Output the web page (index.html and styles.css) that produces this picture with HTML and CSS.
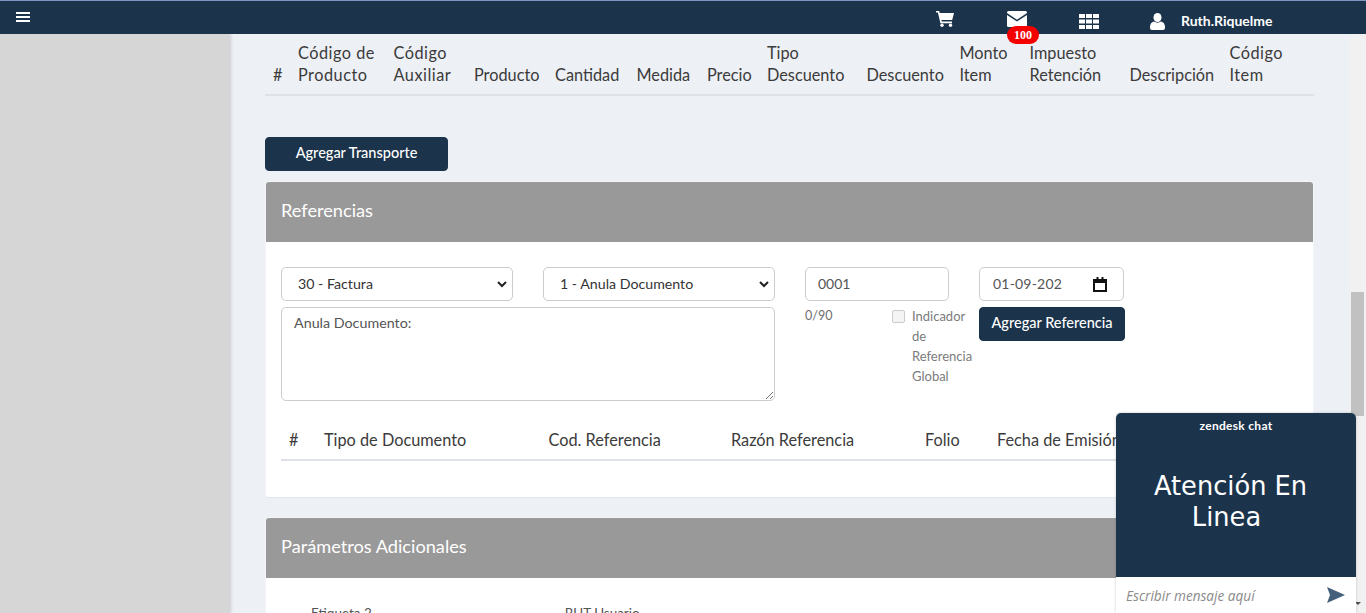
FILE: index.html
```html
<!DOCTYPE html>
<html lang="es">
<head>
<meta charset="utf-8">
<title>Referencias</title>
<link rel="stylesheet" href="styles.css">
</head>
<body>
<header class="topbar">
  <svg class="burger" viewBox="0 0 14 12" width="14" height="12"><path d="M0 1h14v2H0zM0 5h14v2H0zM0 9h14v2H0z" fill="#fff"/></svg>
  <div class="top-icons">
    <svg class="ic-cart" viewBox="0 0 18 16" width="18" height="16"><path d="M0 0h3.2l.5 2H18l-1.8 7H5.4l.4 1.6H16v1.6H4.400L1.900 1.600H0z" fill="#fff"/><circle cx="6" cy="14.300" r="1.700" fill="#fff"/><circle cx="14.500" cy="14.300" r="1.700" fill="#fff"/></svg>
    <div class="mail">
      <svg viewBox="0 0 20 16" width="20" height="16"><path d="M1.500 0h17A1.500 1.500 0 0 1 20 1.500v.6l-10 6.600L0 2.100v-.6A1.500 1.500 0 0 1 1.500 0z" fill="#fff"/><path d="M0 4l10 6.600L20 4v10.500a1.500 1.500 0 0 1-1.500 1.500h-17A1.500 1.500 0 0 1 0 14.500z" fill="#fff"/></svg>
      <span class="badge">100</span>
    </div>
    <svg class="ic-grid" viewBox="0 0 20 15" width="20" height="15"><path d="M0 0h6v4H0zM7 0h6v4H7zM14 0h6v4h-6zM0 5.500h6v4H0zM7 5.500h6v4H7zM14 5.500h6v4h-6zM0 11h6v4H0zM7 11h6v4H7zM14 11h6v4h-6z" fill="#fff"/></svg>
    <div class="user">
      <svg viewBox="0 0 15 17" width="15" height="17"><ellipse cx="7.500" cy="4.500" rx="4" ry="4.500" fill="#fff"/><path d="M0 14c0-3 1.500-5 4-5.500 2 1.500 5 1.500 7 0 2.500.5 4 2.500 4 5.500v1a2 2 0 0 1-2 2H2a2 2 0 0 1-2-2z" fill="#fff"/></svg>
      <span>Ruth.Riquelme</span>
    </div>
  </div>
</header>
<div class="shell">
  <aside class="sidebar"></aside>
  <main class="content">
    <div class="head-row items-head">
      <span class="c-num">#</span>
      <span class="c-cod wide">Código de Producto</span>
      <span class="c-aux wide">Código Auxiliar</span>
      <span class="c-prod">Producto</span>
      <span class="c-cant">Cantidad</span>
      <span class="c-med">Medida</span>
      <span class="c-pre">Precio</span>
      <span class="c-tipo">Tipo Descuento</span>
      <span class="c-desc">Descuento</span>
      <span class="c-mon">Monto Item</span>
      <span class="c-imp">Impuesto Retención</span>
      <span class="c-dsc">Descripción</span>
      <span class="c-item wide">Código Item</span>
    </div>
    <button class="btn btn-transporte">Agregar Transporte</button>
    <section class="card">
      <h2 class="card-head">Referencias</h2>
      <div class="card-body">
        <div class="ref-form">
          <div class="col-main">
            <div class="selects">
              <div class="select sel-a"><span>30 - Factura</span><svg viewBox="0 0 10 7" width="10" height="7"><path d="M1 1l4 4 4-4" fill="none" stroke="#222" stroke-width="2"/></svg></div>
              <div class="select sel-b"><span>1 - Anula Documento</span><svg viewBox="0 0 10 7" width="10" height="7"><path d="M1 1l4 4 4-4" fill="none" stroke="#222" stroke-width="2"/></svg></div>
            </div>
            <div class="textarea">Anula Documento:
              <svg class="grip" viewBox="0 0 8 8" width="8" height="8"><path d="M1 8l7-7M5 8l3-3" stroke="#777" stroke-width="1"/></svg>
            </div>
          </div>
          <div class="col-folio">
            <div class="input">0001</div>
            <div class="count">0/90</div>
          </div>
          <div class="col-check">
            <span class="check"></span>
            <span class="check-label">Indicador de Referencia Global</span>
          </div>
          <div class="col-date">
            <div class="input date"><span class="date-text">01-09-2021</span>
              <svg viewBox="0 0 14 15" width="14" height="15"><path d="M1 3h12v11H1z" fill="none" stroke="#111" stroke-width="2"/><path d="M1 3h12v3H1zM3.500 0h2v3h-2zM8.500 0h2v3h-2z" fill="#111"/></svg>
            </div>
            <button class="btn btn-ref">Agregar Referencia</button>
          </div>
        </div>
        <div class="head-row ref-head">
          <span class="r-num">#</span>
          <span class="r-tipo">Tipo de Documento</span>
          <span class="r-cod">Cod. Referencia</span>
          <span class="r-raz">Razón Referencia</span>
          <span class="r-fol">Folio</span>
          <span class="r-fec">Fecha de Emisión</span>
        </div>
      </div>
    </section>
    <section class="card card-params">
      <h2 class="card-head">Parámetros Adicionales</h2>
      <div class="params">
        <span class="p-a">Etiqueta 2</span>
        <span class="p-b">RUT Usuario</span>
      </div>
    </section>
  </main>
  <div class="scrollbar"><div class="thumb"></div><span class="arrow"></span></div>
</div>
<div class="chat">
  <div class="chat-top">
    <div class="chat-brand">zendesk chat</div>
    <div class="chat-title"><span class="line-one">Atención En</span><span class="line-two">Linea</span></div>
  </div>
  <div class="chat-input">
    <span>Escribir mensaje aquí</span>
    <svg viewBox="0 0 18 16" width="18" height="16"><path d="M0 0l18 8-18 8 3-8z" fill="#44607a"/></svg>
  </div>
</div>
</body>
</html>
```
FILE: styles.css
```css
* { box-sizing: border-box; }
html, body { margin: 0; height: 613px; overflow: hidden; }
body { font-family: "Lato", "Noto Sans", sans-serif; color: #3d3d3d; background: #edf0f5; }

.topbar { height: 34px; background: #1b344c; border-top: 1px solid #7f95c4; display: flex; align-items: flex-start; position: relative; padding-left: 16px; }
.burger { margin-top: 10px; }
.top-icons { display: flex; align-items: flex-start; margin-left: 906px; }
.ic-cart { margin-top: 10px; }
.mail { margin-left: 53px; margin-top: 10px; position: relative; height: 16px; }
.mail svg { display: block; }
.badge { position: absolute; left: 0; top: 15px; width: 32px; height: 18px; background: #f40000; color: #fff; border-radius: 9px; font: bold 12px/18px "Liberation Serif", serif; text-align: center; z-index: 3; }
.ic-grid { margin-left: 52px; margin-top: 13px; }
.user { display: flex; margin-left: 51px; margin-top: 12px; color: #fff; font-size: 14px; font-weight: 700; }
.user span { margin-left: 16px; line-height: 16px; }

.shell { display: flex; height: 579px; }
.sidebar { width: 230px; background: #d6d6d6; box-shadow: 1px 0 3px rgba(0,0,0,.15); flex: none; }
.content { width: 1120px; flex: none; padding-left: 35px; overflow: hidden; }
.scrollbar { width: 16px; background: #f1f1f1; flex: none; padding-top: 258px; position: relative; }
.thumb { width: 13px; margin-left: 1px; height: 124px; background: #c1c1c1; }
.arrow { position: absolute; left: 5px; bottom: 8px; width: 0; height: 0; border-left: 3px solid transparent; border-right: 3px solid transparent; border-top: 3px solid #505050; }

.head-row { display: flex; align-items: flex-end; font-size: 16.300px; line-height: 22px; color: #3b3b3b; }
.wide { letter-spacing: .5px; }
.items-head { width: 1049px; height: 62px; padding-bottom: 8px; border-bottom: 2px solid #dee2e6; }
.c-num { width: 33px; padding-left: 8px; }
.c-cod { width: 95.500px; }
.c-aux { width: 80.500px; }
.c-prod { width: 81px; }
.c-cant { width: 81.500px; }
.c-med { width: 70.500px; }
.c-pre { width: 60px; }
.c-tipo { width: 99.500px; }
.c-desc { width: 93px; }
.c-mon { width: 70px; }
.c-imp { width: 100px; }
.c-dsc { width: 100px; }
.c-item { width: 70px; }

.btn { background: #1b344c; color: #fff; border: 1px solid #1b344c; border-radius: 4px; font-family: inherit; font-size: 14.500px; font-weight: 500; padding: 0 0 4px; }
.btn-transporte { display: block; width: 183px; height: 34px; margin-top: 41px; }

.card { width: 1049px; background: #fff; border: 1px solid #f3f5f8; border-bottom-color: #e2e5ea; border-radius: 4px; overflow: hidden; margin-top: 10px; height: 317px; }
.card-head { margin: 0; height: 60px; background: #999; color: #fff; font-size: 18.200px; font-weight: 400; line-height: 56px; padding-left: 15px; }
.card-body { padding: 25px 15px 0; }
.ref-form { display: flex; height: 143px; }
.col-main { width: 494px; }
.selects { display: flex; justify-content: space-between; }
.select { width: 232px; height: 34px; border: 1px solid #ccc; border-radius: 5px; display: flex; align-items: center; justify-content: space-between; padding: 0 5px 2px 16px; font-size: 14.200px; color: #333; }
.select svg { margin-top: 2px; }
.textarea { position: relative; height: 94px; margin-top: 6px; border: 1px solid #ccc; border-radius: 5px; padding: 5px 12px; font-size: 14.300px; line-height: 20px; color: #555; }
.grip { position: absolute; right: 1px; bottom: 1px; }
.col-folio { width: 144px; margin-left: 30px; }
.input { height: 34px; border: 1px solid #ccc; border-radius: 5px; padding: 0 12px; font-size: 14px; line-height: 32px; color: #555; }
.count { font-size: 12.500px; margin-top: 5px; line-height: 20px; color: #6f6f6f; }
.col-check { width: 87px; margin-left: -57px; padding-top: 39px; display: flex; }
.check { width: 13px; height: 13px; border: 1px solid #ccc; border-radius: 2px; background: #f4f4f4; margin-top: 4px; flex: none; }
.check-label { margin-left: 7px; font-size: 13px; line-height: 20px; color: #7b7b7b; width: 64px; }
.col-date { width: 146px; margin-left: 0; }
.date { width: 145px; padding: 0 16px 0 13px; display: flex; align-items: center; justify-content: space-between; letter-spacing: .2px; }
.date-text { width: 70px; white-space: nowrap; overflow: hidden; }
.btn-ref { width: 146px; height: 34px; margin-top: 6px; display: block; }

.ref-head { height: 51px; width: 1017px; padding-bottom: 8px; border-bottom: 2px solid #dee2e6; margin-top: 0; }
.r-num { width: 43px; padding-left: 8px; }
.r-tipo { width: 224.500px; }
.r-cod { width: 182.500px; }
.r-raz { width: 194px; }
.r-fol { width: 72px; }
.r-fec { width: 140px; white-space: nowrap; }

.card-params { margin-top: 19px; height: 120px; }
.params { display: flex; font-size: 13.500px; color: #555; padding: 27px 0 0 45px; }
.p-b { margin-left: 193px; }

.chat { position: absolute; left: 1116px; top: 413px; width: 240px; height: 200px; border-radius: 5px 5px 0 0; overflow: hidden; box-shadow: 0 0 3px rgba(0,0,0,.2); background: #fff; z-index: 5; }
.chat-top { height: 164px; background: #1b344c; color: #fff; text-align: center; }
.chat-brand { font-size: 12px; letter-spacing: .3px; font-weight: 700; padding-top: 6px; line-height: 14px; }
.chat-title { font-family: "DejaVu Sans", sans-serif; font-size: 25.700px; line-height: 31px; padding: 38px 19px 0 0; }
.line-one, .line-two { display: block; }
.line-one { padding-left: 8px; }
.chat-input { height: 36px; display: flex; align-items: center; justify-content: space-between; padding: 0 11px 0 10px; font-family: "Open Sans", sans-serif; font-size: 13.600px; font-style: italic; color: #8a8a8a; }
```
